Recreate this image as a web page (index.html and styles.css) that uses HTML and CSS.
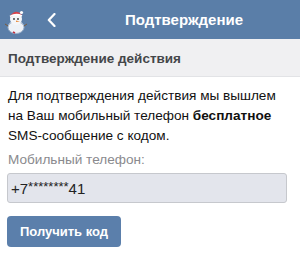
FILE: index.html
```html
<!DOCTYPE html>
<html lang="ru">
<head>
<meta charset="utf-8">
<link rel="stylesheet" href="styles.css">
</head>
<body>
<header class="topbar">
  <div class="avatar">
    <svg width="24" height="26" viewBox="0 0 24 26">
      <ellipse cx="12" cy="19" rx="8" ry="6.5" fill="#eef2f7"/>
      <ellipse cx="12" cy="19.5" rx="8" ry="6" fill="none" stroke="#9fb3cc" stroke-width="1"/>
      <circle cx="12" cy="11" r="6" fill="#f4f6f9"/>
      <path d="M6 8 Q12 0 18 7 L17 8 Q12 5 7 9 Z" fill="#d8414a"/>
      <circle cx="17.5" cy="4.5" r="1.6" fill="#ffffff"/>
      <path d="M6 8.5 Q12 5 18 8" stroke="#ffffff" stroke-width="1.6" fill="none"/>
      <circle cx="10" cy="11" r="0.9" fill="#333"/>
      <circle cx="14" cy="11" r="0.9" fill="#333"/>
      <path d="M12 12.5 L16 13.5 L12 14 Z" fill="#e88a3a"/>
      <path d="M4 18 L1 16" stroke="#7b5a3a" stroke-width="1"/>
      <path d="M20 18 L23 16" stroke="#7b5a3a" stroke-width="1"/>
      <path d="M9 24 L11 25" stroke="#c03040" stroke-width="1.5"/>
    </svg>
  </div>
  <div class="back">
    <svg width="9" height="14" viewBox="0 0 9 14"><path d="M7.5 1 L1.8 7 L7.5 13" fill="none" stroke="#ffffff" stroke-width="2.2" stroke-linecap="round" stroke-linejoin="round"/></svg>
  </div>
  <div class="title">Подтверждение</div>
</header>
<div class="section-head">Подтверждение действия</div>
<main class="content">
  <p class="text">Для подтверждения действия мы вышлем<br>на Ваш мобильный телефон <b>бесплатное</b><br>SMS-сообщение с кодом.</p>
  <div class="label">Мобильный телефон:</div>
  <div class="field"><span>+7</span><span class="stars">********</span><span>41</span></div>
  <button class="btn">Получить код</button>
</main>
</body>
</html>
```

FILE: styles.css
```css
* { box-sizing: border-box; }
html, body { margin: 0; padding: 0; background: #ffffff; }
body {
  width: 300px;
  height: 254px;
  overflow: hidden;
  font-family: "Liberation Sans", Arial, sans-serif;
  color: #000;
}
.topbar {
  height: 39px;
  background: #5a7ea8;
  display: flex;
  align-items: center;
  color: #fff;
}
.avatar {
  width: 24px;
  height: 26px;
  margin-left: 4px;
  margin-top: 2px;
}
.back {
  width: 9px;
  height: 14px;
  margin-left: 19px;
  margin-top: 1px;
  display: flex;
}
.title {
  flex: 1;
  text-align: center;
  font-weight: bold;
  font-size: 15px;
  padding-left: 12px;
}
.section-head {
  height: 38px;
  background: #f0f0f2;
  border-bottom: 1px solid #e2e3e6;
  padding-left: 8px;
  padding-top: 2px;
  display: flex;
  align-items: center;
  font-weight: bold;
  font-size: 13.5px;
  color: #444649;
}
.content {
  padding: 9px 4px 0 8px;
}
.text {
  margin: 0;
  font-size: 13.6px;
  line-height: 20px;
  color: #111;
}
.label {
  margin-top: 5px;
  font-size: 13.6px;
  color: #8a8a8e;
  line-height: 18px;
}
.field {
  margin-top: 4px;
  width: 280px;
  height: 30px;
  margin-left: -1px;
  background: #e3e5ec;
  border: 1px solid #c6c8cd;
  border-radius: 3px;
  padding-left: 3px;
  display: flex;
  align-items: center;
  font-size: 15px;
  color: #222;
}
.stars {
  font-size: 13px;
  align-self: flex-start;
  margin-top: 5px;
}
.btn {
  display: block;
  margin-top: 13px;
  margin-left: -1px;
  width: 114px;
  height: 31px;
  border: none;
  border-radius: 4px;
  background: #5b7fab;
  color: #fff;
  font-family: "Liberation Sans", Arial, sans-serif;
  font-weight: bold;
  font-size: 13px;
  padding: 0;
}
```
